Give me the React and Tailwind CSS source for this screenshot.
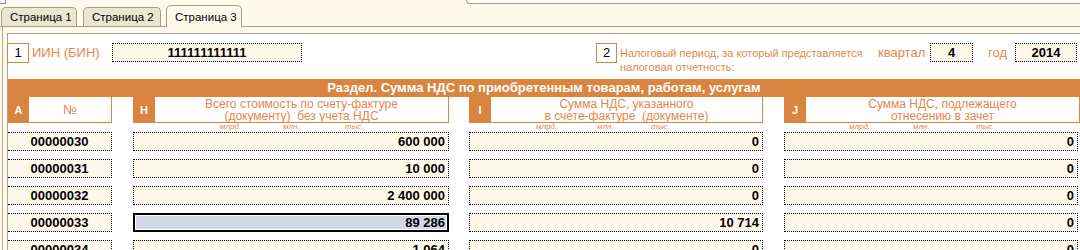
const rows = [
  { n: '00000030', h: '600 000', i: '0', j: '0' },
  { n: '00000031', h: '10 000', i: '0', j: '0' },
  { n: '00000032', h: '2 400 000', i: '0', j: '0' },
  { n: '00000033', h: '89 286', i: '10 714', j: '0', sel: true },
  { n: '00000034', h: '1 064', i: '0', j: '0' },
];

const Tab = ({ active, className, children }) => (
  <div
    className={
      active
        ? `h-[22px] -mb-px bg-[#FFF9EC] border border-b-0 border-[#A89E7D] rounded-t-[5px] pl-[8px] pt-[4px] text-[11.5px] leading-[14px] whitespace-nowrap ${className}`
        : `h-[19px] bg-[#ECE6D0] border border-b-0 border-[#A89E7D] rounded-t-[5px] pl-[8px] pt-[2px] text-[11.5px] leading-[14px] whitespace-nowrap ${className}`
    }
  >
    {children}
  </div>
);

const Cell = ({ className, children, sel }) => (
  <div
    className={
      sel
        ? `h-[19px] border-2 border-black bg-[#D3D6E3] shadow-[inset_0_0_0_1px_#ffffff] flex items-center justify-end pr-[2px] text-[13px] font-bold ${className}`
        : `h-[19px] border border-dotted border-black bg-[#FFF9EC] flex items-center text-[13px] font-bold ${className}`
    }
  >
    {children}
  </div>
);

const Head = ({ letter, className, l1, l2 }) => (
  <div className="flex h-[26px]">
    <div className="w-[22px] bg-[#D9853F] text-white font-bold text-[11px] flex items-center justify-center">{letter}</div>
    <div className={`border-r border-b border-[#D9853F] bg-white text-[#E3874C] text-[12px] leading-[12px] text-center pt-[1px] whitespace-pre overflow-hidden ${className}`}>
      <div>{l1}</div>
      <div>{l2}</div>
    </div>
  </div>
);

export default function App() {
  return (
    <div className="w-[1080px] h-[250px] overflow-hidden bg-[#FFF9EC] font-['Liberation_Sans',Arial,sans-serif] text-black">
      {/* cut-off strip above the tabs */}
      <div className="h-[5px] flex">
        <div className="w-[6px] h-[4px] border-r border-b border-[#8A8A8A] bg-white" />
        <div className="ml-[460px] flex-1 h-[4px] border-l border-b border-[#A89E7D] rounded-bl-[4px] bg-white" />
      </div>

      {/* tabs */}
      <div className="h-[22px] flex items-end border-b border-[#A89E7D] pl-[1px]">
        <Tab className="w-[76px]">Страница 1</Tab>
        <Tab className="w-[78px] ml-[6px]">Страница 2</Tab>
        <Tab active className="w-[76px] ml-[5px]">Страница 3</Tab>
      </div>

      {/* page frame */}
      <div className="ml-[2px] border-l border-[#B8AC8C] pl-[4px] pt-[6px] h-[224px]">
        <div className="border-l border-t border-[#A8A396] bg-white h-full">
          {/* INN and period */}
          <div className="flex items-start mt-[9px] h-[20px]">
            <div className="w-[22px] h-[20px] -ml-px border border-[#D9853F] flex items-center justify-center text-[13px]">1</div>
            <div className="w-[83px] pl-[3px] text-[13px] leading-[20px] text-[#E3874C]">ИИН (БИН)</div>
            <Cell className="w-[190px] justify-center">111111111111</Cell>

            <div className="ml-[294px] w-[21px] h-[20px] border border-[#D9853F] flex items-center justify-center text-[13px]">2</div>
            <div className="w-[261px] pl-[3px] mt-[3px] text-[11px] leading-[14px] text-[#E3874C]">
              Налоговый период, за который представляется
              <br />
              налоговая отчетность:
            </div>
            <div className="w-[52px] text-[13px] leading-[20px] text-[#E3874C]">квартал</div>
            <Cell className="w-[43px] justify-center">4</Cell>
            <div className="w-[27px] ml-[15px] text-[13px] leading-[20px] text-[#E3874C]">год</div>
            <Cell className="w-[62px] justify-center">2014</Cell>
          </div>

          {/* section title */}
          <div className="mt-[16px] h-[18px] bg-[#D9853F] text-white font-bold text-[13px] leading-[18px] text-center">
            Раздел. Сумма НДС по приобретенным товарам, работам, услугам
          </div>

          {/* column heads */}
          <div className="flex">
            <div className="flex h-[26px]">
              <div className="w-[21px] bg-[#D9853F] text-white font-bold text-[11px] flex items-center justify-center">A</div>
              <div className="w-[83px] border-r border-b border-[#D9853F] text-[#E3874C] text-[13px] flex items-center justify-center">№</div>
            </div>
            <div className="ml-[21px]">
              <Head letter="H" className="w-[294px]" l1="Всего стоимость по счету-фактуре" l2="(документу)  без учета НДС" />
            </div>
            <div className="ml-[20px]">
              <Head letter="I" className="w-[272px]" l1="Сумма НДС, указанного" l2="в счете-фактуре  (документе)" />
            </div>
            <div className="ml-[21px]">
              <Head letter="J" className="w-[274px]" l1="Сумма НДС, подлежащего" l2="отнесению в зачет" />
            </div>
          </div>

          {/* units */}
          <div className="flex h-[9px] pl-[212px] text-[8px] leading-[8px] italic text-[#E3874C]">
            <span className="w-[63px]">млрд.</span>
            <span className="w-[62px]">млн.</span>
            <span className="w-[191px]">тыс.</span>
            <span className="w-[61px]">млрд.</span>
            <span className="w-[54px]">млн.</span>
            <span className="w-[198px]">тыс.</span>
            <span className="w-[64px]">млрд.</span>
            <span className="w-[63px]">млн.</span>
            <span>тыс.</span>
          </div>

          {/* data rows */}
          <div className="flex flex-col gap-[8px]">
            {rows.map((r) => (
              <div key={r.n} className="flex">
                <Cell className="w-[104px] border-l-0 justify-center">{r.n}</Cell>
                <Cell sel={r.sel} className={r.sel ? 'w-[316px] ml-[21px]' : 'w-[316px] ml-[21px] justify-end pr-[3px]'}>{r.h}</Cell>
                <Cell className="w-[294px] ml-[20px] justify-end pr-[3px]">{r.i}</Cell>
                <Cell className="w-[294px] ml-[21px] justify-end pr-[3px]">{r.j}</Cell>
              </div>
            ))}
          </div>
        </div>
      </div>
    </div>
  );
}
